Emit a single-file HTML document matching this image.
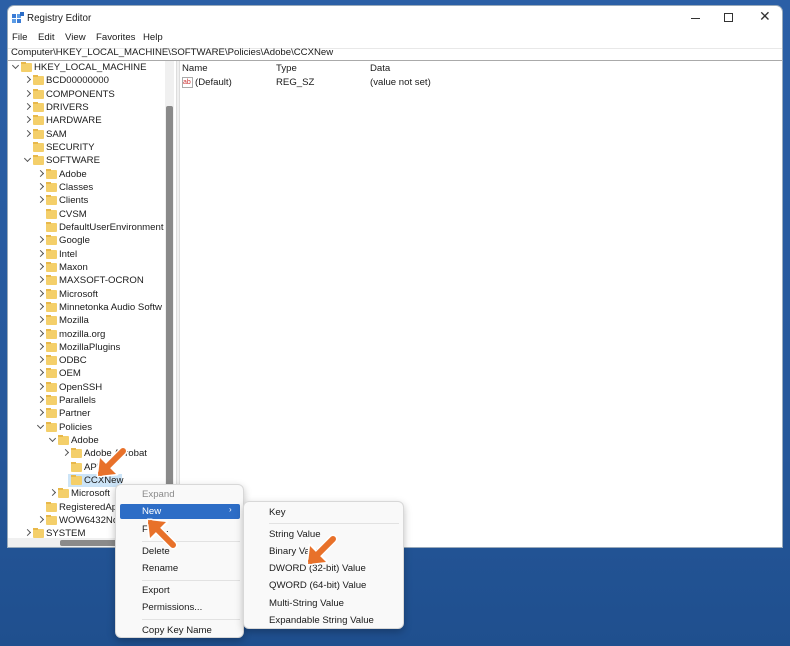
<!DOCTYPE html>
<html><head><meta charset="utf-8"><style>
*{margin:0;padding:0;box-sizing:border-box}
body{width:790px;height:646px;overflow:hidden;background:#2a5ea3;font-family:"Liberation Sans",sans-serif;font-size:9.6px;color:#1a1a1a;position:relative}
.bg{position:absolute;inset:0;background:linear-gradient(180deg,#2b5fa6 0%,#25579a 70%,#1f4f8e 100%)}
.win{position:absolute;left:7px;top:5px;width:776px;height:543px;background:#fff;border-radius:7px 7px 0 0;overflow:hidden;border:1px solid #9ab}
.a{position:absolute;white-space:nowrap}
.r{position:absolute;height:13px;line-height:13px;white-space:nowrap}
.r .c{position:absolute;left:0;top:3px;width:5px;height:5px;border-right:1px solid #555;border-bottom:1px solid #555;transform:rotate(-45deg)}
.r .d{position:absolute;left:0;top:2px;width:5px;height:5px;border-right:1px solid #555;border-bottom:1px solid #555;transform:rotate(45deg)}
.r .f{position:absolute;left:8px;top:2px;width:11px;height:9px;background:#f4cf6a;border-radius:1px}
.r .f:before{content:"";position:absolute;left:0;top:-1px;width:5px;height:2px;background:#e8b84a}
.r .t{position:absolute;left:21px;top:0}
.menu{position:absolute;background:#f9f9f9;border:1px solid #d8d8d8;border-radius:6px;box-shadow:0 3px 8px rgba(0,0,0,.25)}
.mi{position:absolute;white-space:nowrap;font-size:9.6px}
.sep{position:absolute;height:1px;background:#e2e2e2}
</style></head><body>
<div class="bg"></div>
<div class="win">
 <div class="a" style="left:4px;top:6px;width:12px;height:12px">
  <svg width="12" height="12"><rect x="0" y="2" width="4" height="4" fill="#3a7bd5"/><rect x="5" y="2" width="4" height="4" fill="#5a9be5"/><rect x="0" y="7" width="4" height="4" fill="#5a9be5"/><rect x="5" y="7" width="4" height="4" fill="#3a7bd5"/><rect x="8" y="0" width="4" height="4" fill="#2a6bc5"/></svg>
 </div>
 <div class="a" style="left:19px;top:7px;font-size:9.8px">Registry Editor</div>
 <div class="a" style="left:683px;top:12px;width:9px;height:1px;background:#333"></div>
 <div class="a" style="left:716px;top:7px;width:9px;height:9px;border:1px solid #333"></div>
 <div class="a" style="left:751px;top:2px;font-size:14px;color:#333">✕</div>
 <div class="a" style="left:4px;top:26px">File</div>
 <div class="a" style="left:30px;top:26px">Edit</div>
 <div class="a" style="left:57px;top:26px">View</div>
 <div class="a" style="left:88px;top:26px">Favorites</div>
 <div class="a" style="left:135px;top:26px">Help</div>
 <div class="a" style="left:0;top:42px;width:776px;height:1px;background:#e8e8e8"></div>
 <div class="a" style="left:3px;top:41px">Computer\HKEY_LOCAL_MACHINE\SOFTWARE\Policies\Adobe\CCXNew</div>
 <div class="a" style="left:0;top:54px;width:776px;height:1px;background:#aaa"></div>
 <div class="a" style="left:168px;top:55px;width:4px;height:488px;background:#f0f0f0;border-left:1px solid #ddd;border-right:1px solid #ddd"></div>
 <div class="a" style="left:157px;top:55px;width:9px;height:477px;background:#f0f0f0"></div>
 <div class="a" style="left:158px;top:100px;width:7px;height:382px;background:#8a8a8a;border-radius:2px"></div>
 <div class="a" style="left:174px;top:57px">Name</div>
 <div class="a" style="left:268px;top:57px">Type</div>
 <div class="a" style="left:362px;top:57px">Data</div>
 <div class="a" style="left:174px;top:71px;width:11px;height:11px;border:1px solid #aaa;font-size:7px;color:#c33;line-height:9px;background:#fff">ab</div>
 <div class="a" style="left:187px;top:71px">(Default)</div>
 <div class="a" style="left:268px;top:71px">REG_SZ</div>
 <div class="a" style="left:362px;top:71px">(value not set)</div>
 <div style="position:absolute;left:-7px;top:-5px">
 <div class="r" style="left:12px;top:60px"><span class="d"></span><i class="f"></i><span class="t">HKEY_LOCAL_MACHINE</span></div>
 <div class="r" style="left:24px;top:73px"><span class="c"></span><i class="f"></i><span class="t">BCD00000000</span></div>
 <div class="r" style="left:24px;top:87px"><span class="c"></span><i class="f"></i><span class="t">COMPONENTS</span></div>
 <div class="r" style="left:24px;top:100px"><span class="c"></span><i class="f"></i><span class="t">DRIVERS</span></div>
 <div class="r" style="left:24px;top:113px"><span class="c"></span><i class="f"></i><span class="t">HARDWARE</span></div>
 <div class="r" style="left:24px;top:127px"><span class="c"></span><i class="f"></i><span class="t">SAM</span></div>
 <div class="r" style="left:24px;top:140px"><i class="f"></i><span class="t">SECURITY</span></div>
 <div class="r" style="left:24px;top:153px"><span class="d"></span><i class="f"></i><span class="t">SOFTWARE</span></div>
 <div class="r" style="left:37px;top:167px"><span class="c"></span><i class="f"></i><span class="t">Adobe</span></div>
 <div class="r" style="left:37px;top:180px"><span class="c"></span><i class="f"></i><span class="t">Classes</span></div>
 <div class="r" style="left:37px;top:193px"><span class="c"></span><i class="f"></i><span class="t">Clients</span></div>
 <div class="r" style="left:37px;top:207px"><i class="f"></i><span class="t">CVSM</span></div>
 <div class="r" style="left:37px;top:220px"><i class="f"></i><span class="t">DefaultUserEnvironment</span></div>
 <div class="r" style="left:37px;top:233px"><span class="c"></span><i class="f"></i><span class="t">Google</span></div>
 <div class="r" style="left:37px;top:247px"><span class="c"></span><i class="f"></i><span class="t">Intel</span></div>
 <div class="r" style="left:37px;top:260px"><span class="c"></span><i class="f"></i><span class="t">Maxon</span></div>
 <div class="r" style="left:37px;top:273px"><span class="c"></span><i class="f"></i><span class="t">MAXSOFT-OCRON</span></div>
 <div class="r" style="left:37px;top:287px"><span class="c"></span><i class="f"></i><span class="t">Microsoft</span></div>
 <div class="r" style="left:37px;top:300px"><span class="c"></span><i class="f"></i><span class="t">Minnetonka Audio Softw</span></div>
 <div class="r" style="left:37px;top:313px"><span class="c"></span><i class="f"></i><span class="t">Mozilla</span></div>
 <div class="r" style="left:37px;top:327px"><span class="c"></span><i class="f"></i><span class="t">mozilla.org</span></div>
 <div class="r" style="left:37px;top:340px"><span class="c"></span><i class="f"></i><span class="t">MozillaPlugins</span></div>
 <div class="r" style="left:37px;top:353px"><span class="c"></span><i class="f"></i><span class="t">ODBC</span></div>
 <div class="r" style="left:37px;top:366px"><span class="c"></span><i class="f"></i><span class="t">OEM</span></div>
 <div class="r" style="left:37px;top:380px"><span class="c"></span><i class="f"></i><span class="t">OpenSSH</span></div>
 <div class="r" style="left:37px;top:393px"><span class="c"></span><i class="f"></i><span class="t">Parallels</span></div>
 <div class="r" style="left:37px;top:406px"><span class="c"></span><i class="f"></i><span class="t">Partner</span></div>
 <div class="r" style="left:37px;top:420px"><span class="d"></span><i class="f"></i><span class="t">Policies</span></div>
 <div class="r" style="left:49px;top:433px"><span class="d"></span><i class="f"></i><span class="t">Adobe</span></div>
 <div class="r" style="left:62px;top:446px"><span class="c"></span><i class="f"></i><span class="t">Adobe Acrobat</span></div>
 <div class="r" style="left:62px;top:460px"><i class="f"></i><span class="t">APIP</span></div>
 <div class="a" style="left:67px;top:473px;width:54px;height:13px;background:#cce4f7"></div>
 <div class="r" style="left:62px;top:473px"><i class="f"></i><span class="t">CCXNew</span></div>
 <div class="r" style="left:49px;top:486px"><span class="c"></span><i class="f"></i><span class="t">Microsoft</span></div>
 <div class="r" style="left:37px;top:500px"><i class="f"></i><span class="t">RegisteredApp</span></div>
 <div class="r" style="left:37px;top:513px"><span class="c"></span><i class="f"></i><span class="t">WOW6432Node</span></div>
 <div class="r" style="left:24px;top:526px"><span class="c"></span><i class="f"></i><span class="t">SYSTEM</span></div>
 </div>
 <div class="a" style="left:0;top:532px;width:157px;height:11px;background:#f0f0f0"></div>
 <div class="a" style="left:52px;top:534px;width:60px;height:6px;background:#8a8a8a;border-radius:2px"></div>
</div>
<div class="menu" style="left:115px;top:484px;width:129px;height:154px">
 <div class="mi" style="left:26px;top:4px;color:#8a8a8a">Expand</div>
 <div class="a" style="left:4px;top:19px;width:120px;height:15px;background:#2d6dc6;border-radius:2px"></div>
 <div class="mi" style="left:26px;top:21px;color:#fff">New</div>
 <div class="mi" style="left:113px;top:20px;color:#fff;font-size:8px">›</div>
 <div class="mi" style="left:26px;top:39px">Find...</div>
 <div class="sep" style="left:26px;top:56px;width:98px"></div>
 <div class="mi" style="left:26px;top:61px">Delete</div>
 <div class="mi" style="left:26px;top:78px">Rename</div>
 <div class="sep" style="left:26px;top:95px;width:98px"></div>
 <div class="mi" style="left:26px;top:100px">Export</div>
 <div class="mi" style="left:26px;top:117px">Permissions...</div>
 <div class="sep" style="left:26px;top:134px;width:98px"></div>
 <div class="mi" style="left:26px;top:140px">Copy Key Name</div>
</div>
<div class="menu" style="left:243px;top:501px;width:161px;height:128px">
 <div class="mi" style="left:25px;top:5px">Key</div>
 <div class="sep" style="left:25px;top:21px;width:130px"></div>
 <div class="mi" style="left:25px;top:27px">String Value</div>
 <div class="mi" style="left:25px;top:44px">Binary Value</div>
 <div class="mi" style="left:25px;top:61px">DWORD (32-bit) Value</div>
 <div class="mi" style="left:25px;top:78px">QWORD (64-bit) Value</div>
 <div class="mi" style="left:25px;top:96px">Multi-String Value</div>
 <div class="mi" style="left:25px;top:113px">Expandable String Value</div>
</div>
<svg class="a" style="left:0;top:0" width="790" height="646">
 <defs>
  <g id="ar">
   <path d="M0 0 L22 22" stroke="#fff" stroke-width="9" stroke-linecap="round"/>
   <path d="M-3 -3 L16 -1 L-1 16 Z" fill="#fff" stroke="#fff" stroke-width="3" stroke-linejoin="round"/>
   <path d="M0 0 L22 22" stroke="#e8712a" stroke-width="6" stroke-linecap="round"/>
   <path d="M-3 -3 L15 -1 L-1 15 Z" fill="#e8712a"/>
  </g>
 </defs>
 <use href="#ar" transform="translate(101,473) rotate(-90)"/>
 <use href="#ar" transform="translate(151,523)"/>
 <use href="#ar" transform="translate(311,561) rotate(-90)"/>
</svg>
</body></html>
